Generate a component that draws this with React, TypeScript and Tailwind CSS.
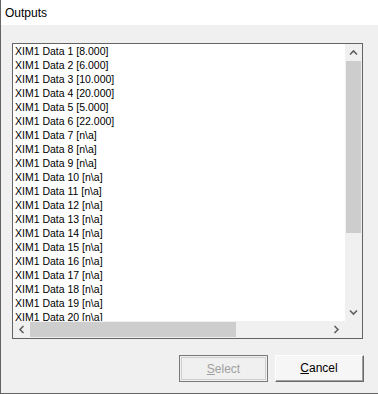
import React from 'react';

const rows = [
    'XIM1 Data 1 [8.000]',
    'XIM1 Data 2 [6.000]',
    'XIM1 Data 3 [10.000]',
    'XIM1 Data 4 [20.000]',
    'XIM1 Data 5 [5.000]',
    'XIM1 Data 6 [22.000]',
    ...Array.from({ length: 14 }, (_, i) => `XIM1 Data ${i + 7} [n\\a]`),
];

const Chevron: React.FC<{ dir: 'up' | 'down' | 'left' | 'right' }> = ({ dir }) => {
    const rot = { up: 'rotate-0', down: 'rotate-180', left: '-rotate-90', right: 'rotate-90' }[dir];
    return (
        <svg width="9" height="9" viewBox="0 0 9 9" className={rot}>
            <path d="M1 6.5 L4.5 3 L8 6.5" fill="none" stroke="#606060" strokeWidth="1.6" />
        </svg>
    );
};

const App: React.FC = () => {
    return (
        <div
            className="w-[378px] h-[394px] bg-[#f0f0f0] border-l border-b border-[#646464] flex flex-col overflow-hidden"
            style={{ fontFamily: '"Liberation Sans", Arial, sans-serif' }}
        >
            <header className="h-[25px] bg-white pl-[4px] flex items-center text-[12px] text-black">Outputs</header>

            <div className="ml-[11px] mt-[18px] w-[351px] h-[296px] border border-[#646464] bg-white flex flex-col">
                <div className="flex flex-1 min-h-0">
                    <div className="flex-1 overflow-hidden pl-[2px] text-[10.5px] leading-[14px] text-black">
                        {rows.map(r => (
                            <div key={r} className="h-[14px] whitespace-nowrap">{r}</div>
                        ))}
                    </div>
                    <div className="w-[17px] bg-[#f0f0f0] flex flex-col">
                        <div className="h-[17px] flex items-center justify-center"><Chevron dir="up" /></div>
                        <div className="flex-1 px-[1px]">
                            <div className="h-[172px] bg-[#cdcdcd]"></div>
                        </div>
                        <div className="h-[17px] flex items-center justify-center"><Chevron dir="down" /></div>
                    </div>
                </div>
                <div className="h-[17px] flex bg-[#f0f0f0]">
                    <div className="w-[17px] flex items-center justify-center"><Chevron dir="left" /></div>
                    <div className="flex-1 py-[1px]">
                        <div className="w-[206px] h-full bg-[#cdcdcd]"></div>
                    </div>
                    <div className="w-[17px] flex items-center justify-center"><Chevron dir="right" /></div>
                    <div className="w-[17px]"></div>
                </div>
            </div>

            <div className="flex justify-end gap-[7px] mt-[16px] pr-[14px] text-[12px]">
                <button className="w-[89px] h-[27px] border border-[#7a7a7a] bg-[#f0f0f0] text-[#a0a0a0] p-[1px]">
                    <span className="flex items-center justify-center w-full h-full border border-[#cfcfcf]">
                        <span><span className="underline">S</span>elect</span>
                    </span>
                </button>
                <button className="w-[89px] h-[27px] border-t border-l border-white border-r border-b border-r-[#696969] border-b-[#696969] bg-[#f6f6f6] text-black">
                    <span className="flex items-center justify-center w-full h-full border-r border-b border-[#a0a0a0]">
                        <span><span className="underline">C</span>ancel</span>
                    </span>
                </button>
            </div>
        </div>
    );
};

export default App;
